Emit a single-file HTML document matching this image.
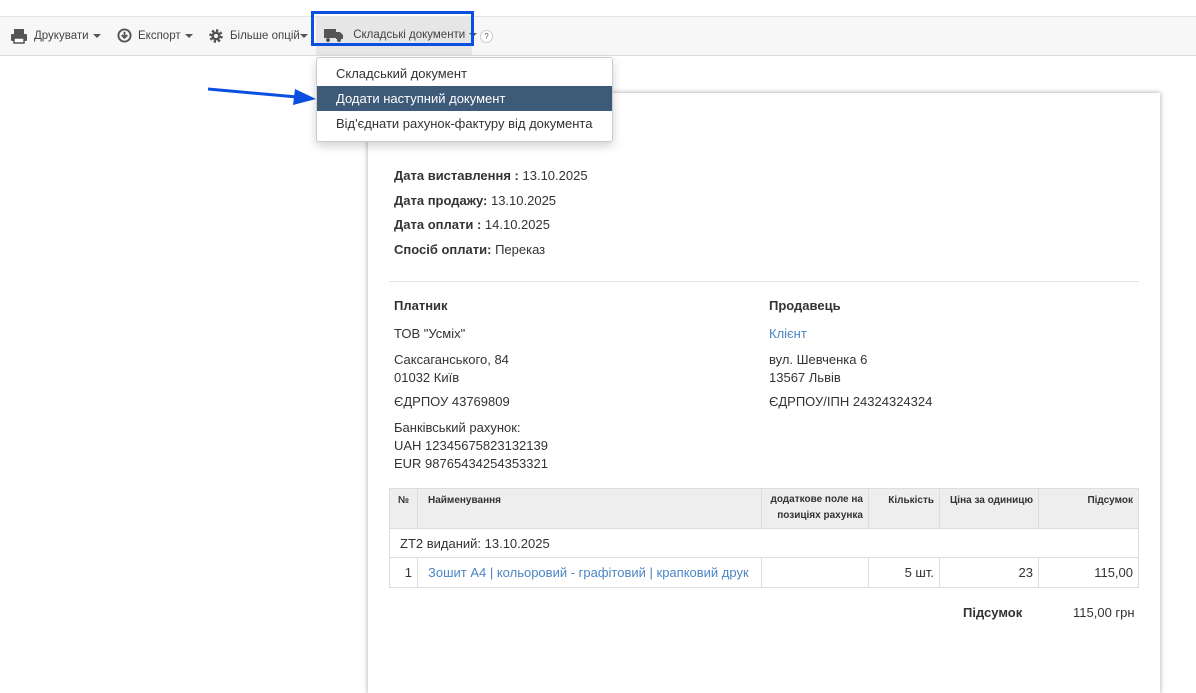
<!DOCTYPE html>
<html><head><meta charset="utf-8"><style>
*{box-sizing:border-box;margin:0;padding:0}
body{width:1196px;height:670px;overflow:hidden;background:#fff;font-family:"Liberation Sans",sans-serif;color:#333;font-size:13px;position:relative}
.tb{position:absolute;left:0;top:16px;width:1196px;height:40px;background:#f7f7f7;border-top:1px solid #e3e3e3;border-bottom:1px solid #ddd}
.tbi{position:absolute;top:12px;font-size:11.5px;color:#444;display:flex;align-items:center}
.tbi svg{margin-right:6px}
.car{display:inline-block;border-left:4px solid transparent;border-right:4px solid transparent;border-top:4px solid #555;margin-left:4px}
.hl{position:absolute;left:316px;top:16px;width:156px;height:39px;background:#e6e6e6}
.blue{position:absolute;left:311px;top:11px;width:163px;height:35px;border:3px solid #0a4fe0}
.dd{position:absolute;left:316px;top:57px;width:297px;height:85px;background:#fff;border:1px solid #ccc;border-radius:3px;box-shadow:0 4px 10px rgba(0,0,0,.18);z-index:5}
.dd div{height:25px;line-height:25px;padding-left:19px;font-size:13px;color:#333}
.dd .a{background:#3d5a78;color:#fff}
.paper{position:absolute;left:368px;top:93px;width:792px;height:600px;background:#fff;box-shadow:0 0 5px rgba(0,0,0,.35)}
.t{position:absolute;font-size:13px;color:#333;white-space:nowrap}
b{font-weight:bold}
.lk{color:#4a86c5}
table{position:absolute;left:389px;top:488px;width:750px;border-collapse:collapse;font-size:13px}
td,th{border:1px solid #ddd;padding:0 5px}
th{background:#eee;font-size:10px;font-weight:bold;vertical-align:top;padding-top:6px;height:40px}
</style></head><body>
<div class="tb"></div>
<div class="hl"></div>
<div class="tbi" style="left:10px;top:28px"><svg width="18" height="16" viewBox="0 0 18 16"><rect x="4" y="1" width="10" height="5" fill="#555"/><rect x="1" y="6" width="16" height="7" rx="1" fill="#555"/><rect x="4" y="10" width="10" height="5" fill="#fff" stroke="#555" stroke-width="1.5"/></svg>Друкувати<span class="car"></span></div>
<div class="tbi" style="left:117px;top:28px"><svg width="15" height="15" viewBox="0 0 16 16"><circle cx="8" cy="8" r="6.5" fill="none" stroke="#555" stroke-width="2"/><path d="M8 4v6M5 7.5l3 3 3-3" stroke="#555" stroke-width="2" fill="none"/></svg>Експорт<span class="car"></span></div>
<div class="tbi" style="left:208px;top:28px"><svg width="16" height="16" viewBox="0 0 16 16"><circle cx="8" cy="8" r="5" fill="none" stroke="#555" stroke-width="3.5" stroke-dasharray="2.2 1.7"/><circle cx="8" cy="8" r="4.5" fill="#555"/><circle cx="8" cy="8" r="2" fill="#f7f7f7"/></svg>Більше опцій<span class="car" style="margin-left:0"></span></div>
<div class="tbi" style="left:324px;top:28px"><svg width="20" height="14" viewBox="0 0 20 14"><rect x="0" y="1" width="12" height="9" fill="#555"/><path d="M12 4h4l3 3v4h-7z" fill="#555"/><circle cx="4" cy="12" r="2" fill="#555"/><circle cx="15" cy="12" r="2" fill="#555"/></svg>&nbsp;Складські документи<span class="car" style="margin-left:4px"></span></div>
<div style="position:absolute;left:480px;top:30px;width:13px;height:13px;border:1px solid #ccc;border-radius:50%;background:#fff;font-size:8px;text-align:center;line-height:11px;color:#555">?</div>
<div class="blue"></div>
<div class="dd"><div style="margin-top:3px">Складський документ</div><div class="a">Додати наступний документ</div><div>Від'єднати рахунок-фактуру від документа</div></div>
<svg style="position:absolute;left:205px;top:84px" width="112" height="24"><line x1="3" y1="5" x2="92" y2="13" stroke="#0a4fe0" stroke-width="3"/><path d="M90 5 L111 15 L88 21 Z" fill="#0a4fe0"/></svg>
<div class="paper"></div>
<div class="t" style="left:394px;top:168px"><b>Дата виставлення :</b> 13.10.2025</div>
<div class="t" style="left:394px;top:193px"><b>Дата продажу:</b> 13.10.2025</div>
<div class="t" style="left:394px;top:217px"><b>Дата оплати :</b> 14.10.2025</div>
<div class="t" style="left:394px;top:242px"><b>Спосіб оплати:</b> Переказ</div>
<div style="position:absolute;left:389px;top:281px;width:750px;border-top:1px solid #e5e5e5"></div>
<div class="t" style="left:394px;top:298px"><b>Платник</b></div>
<div class="t" style="left:394px;top:326px">ТОВ "Усміх"</div>
<div class="t" style="left:394px;top:351px;line-height:18px">Саксаганського, 84<br>01032 Київ</div>
<div class="t" style="left:394px;top:394px">ЄДРПОУ 43769809</div>
<div class="t" style="left:394px;top:419px;line-height:18px">Банківський рахунок:<br>UAH 12345675823132139<br>EUR 98765434254353321</div>
<div class="t" style="left:769px;top:298px"><b>Продавець</b></div>
<div class="t lk" style="left:769px;top:326px">Клієнт</div>
<div class="t" style="left:769px;top:351px;line-height:18px">вул. Шевченка 6<br>13567 Львів</div>
<div class="t" style="left:769px;top:394px">ЄДРПОУ/ІПН 24324324324</div>
<table>
<tr><th style="width:28px">№</th><th style="text-align:left;padding-left:10px;width:344px">Найменування</th><th style="text-align:right;width:107px;line-height:16px;padding-top:3px">додаткове поле на позиціях рахунка</th><th style="text-align:right;width:71px">Кількість</th><th style="text-align:right;width:99px">Ціна за одиницю</th><th style="text-align:right">Підсумок</th></tr>
<tr><td colspan="6" style="height:29px;padding-left:10px">ZT2 виданий: 13.10.2025</td></tr>
<tr style="height:30px"><td style="text-align:right">1</td><td class="lk" style="padding-left:10px">Зошит А4 | кольоровий - графітовий | крапковий друк</td><td></td><td style="text-align:right">5 шт.</td><td style="text-align:right">23</td><td style="text-align:right">115,00</td></tr>
</table>
<div class="t" style="left:963px;top:605px"><b>Підсумок</b></div>
<div class="t" style="left:1073px;top:605px">115,00 грн</div>
</body></html>
